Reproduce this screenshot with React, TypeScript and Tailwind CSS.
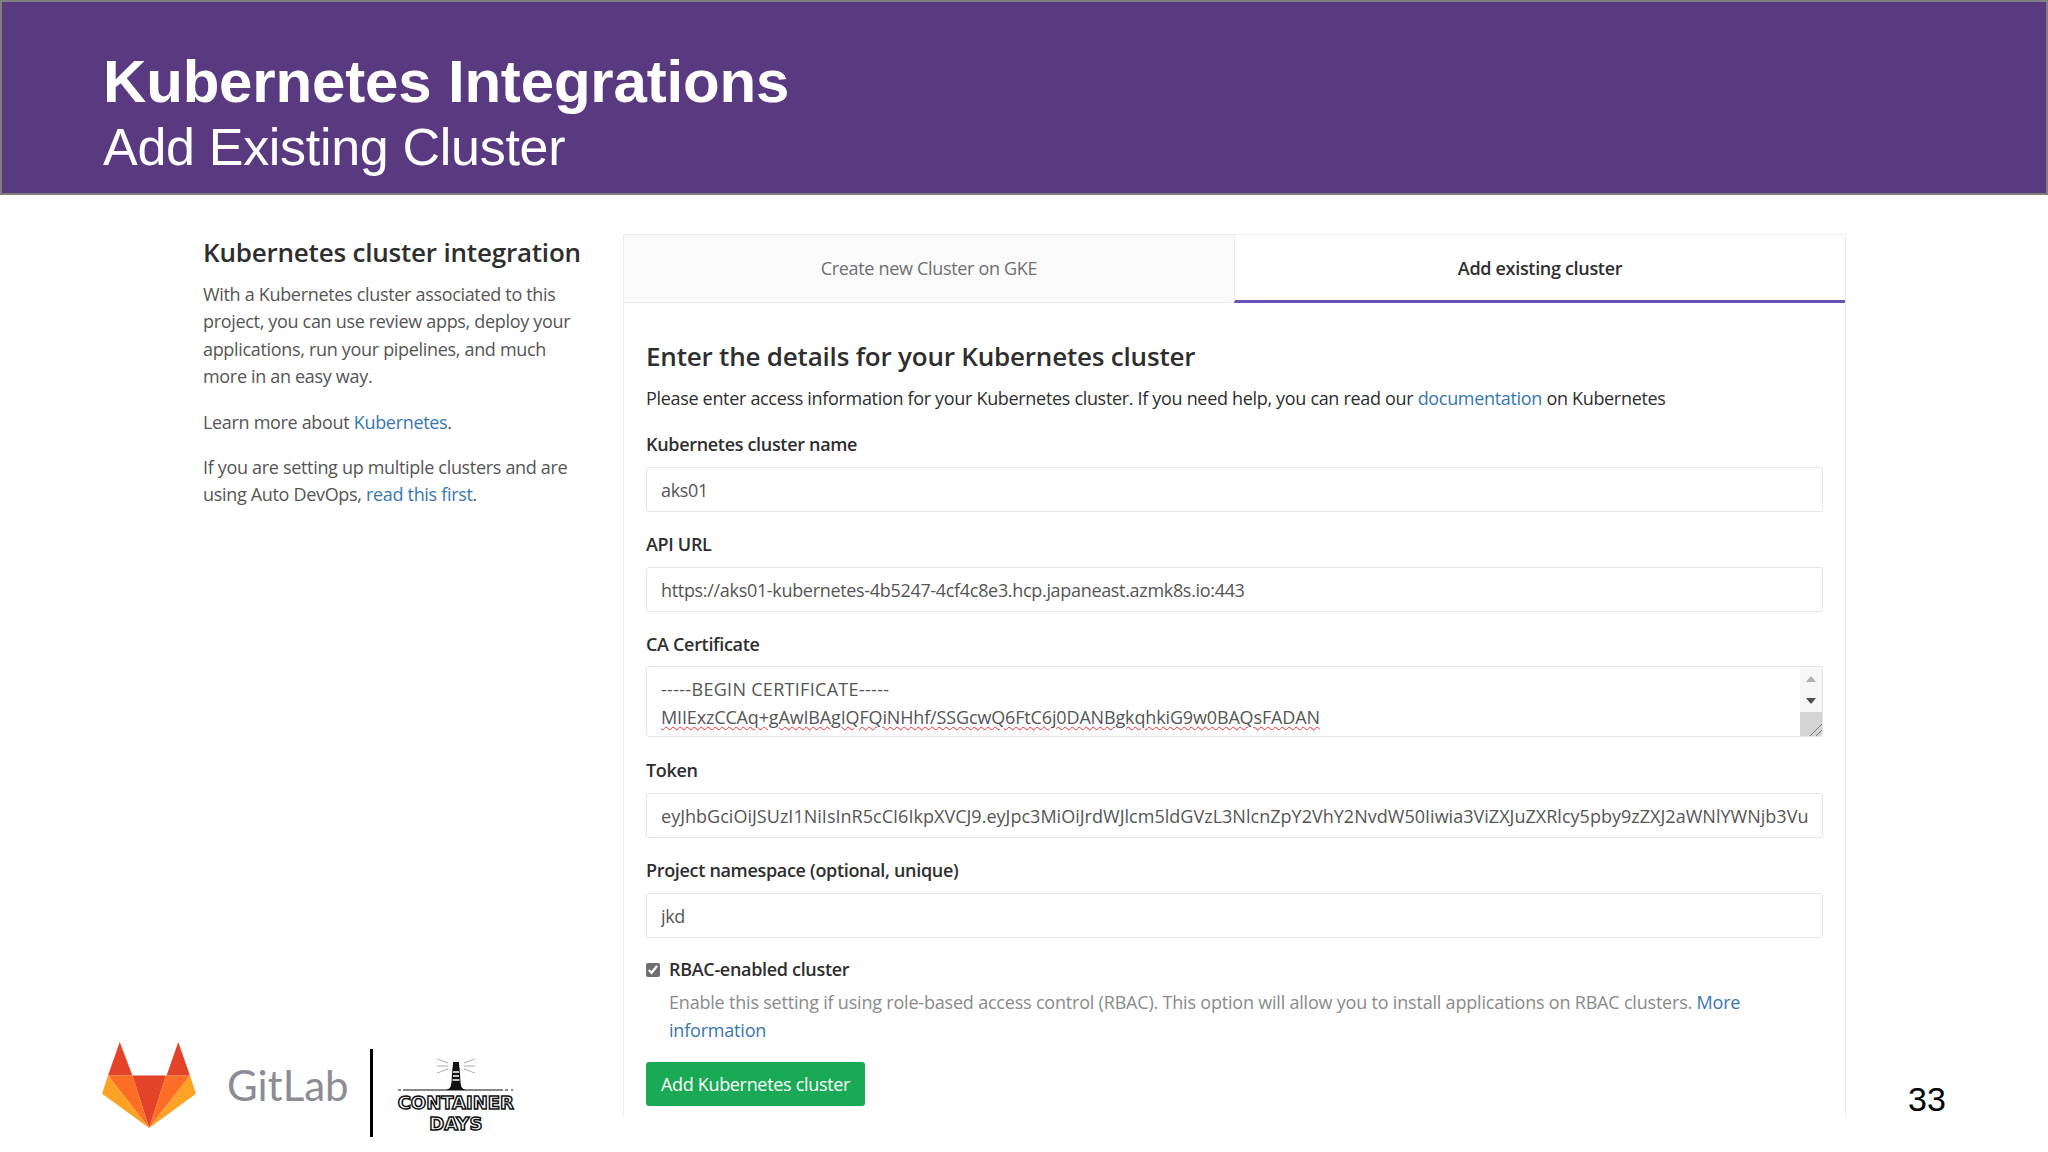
const font = "font-['Open_Sans','Noto_Sans',sans-serif]";
const token =
  'eyJhbGciOiJSUzI1NiIsInR5cCI6IkpXVCJ9.eyJpc3MiOiJrdWJlcm5ldGVzL3NlcnZpY2VhY2NvdW50Iiwia3ViZXJuZXRlcy5pby9zZXJ2aWNlYWNjb3VudCI6';

function Field({ label, value, className, inputClass }: { label: string; value: string; className?: string; inputClass?: string }) {
  return (
    <div className={className}>
      <label className="block h-[27px] leading-[27px] font-semibold text-[#2e2e2e]">{label}</label>
      <input
        readOnly
        value={value}
        className={`mt-[9px] block h-[45px] w-full rounded-[3px] border border-[#e5e5e5] bg-white px-[14px] text-[#555] outline-none ${inputClass ?? ''}`}
      />
    </div>
  );
}

function GitlabFox() {
  return (
    <svg viewBox="127 128 281 257" className="mb-[21px] h-[86px] w-[94px] shrink-0">
      <polygon points="180,128 145,228 218,228" fill="#e24329" />
      <polygon points="355,128 320,228 390,228" fill="#e24329" />
      <polygon points="218,228 318,228 268,385" fill="#e24329" />
      <polygon points="145,228 218,228 268,385" fill="#fc6d26" />
      <polygon points="390,228 318,228 268,385" fill="#fc6d26" />
      <polygon points="145,228 127,283 268,385" fill="#fca326" />
      <polygon points="390,228 408,283 268,385" fill="#fca326" />
    </svg>
  );
}

function Lighthouse() {
  return (
    <svg viewBox="0 0 116 34" className="mb-[1px] h-[34px] w-[116px]">
      <path d="M0 33H116" stroke="#111" strokeWidth="1" strokeDasharray="3 2 100 2 3" />
      <path d="M48 33c4-1 5-3 5.500-8l1-15h7l1 15c.5 5 1.500 7 5.500 8z" fill="#111" />
      <path d="M55 15h6M55 19h6M54.500 23h7" stroke="#fff" strokeWidth="1.500" />
      <path d="M54 9l4-4 4 4z" fill="#111" />
      <rect x="55" y="5" width="6" height="5" fill="#111" />
      <path d="M50 6l-11-4M50 9H39M50 12l-11 4M66 6l11-4M66 9h11M66 12l11 4" stroke="#888" strokeWidth="0.700" />
    </svg>
  );
}

function ScrollGutter() {
  return (
    <div className="flex w-[22px] shrink-0 flex-col items-center bg-[#f6f6f6]">
      <svg viewBox="0 0 10 6" className="mt-[9px] h-[6px] w-[10px]">
        <polygon points="5,0 10,6 0,6" fill="#b0b0b0" />
      </svg>
      <svg viewBox="0 0 10 6" className="mt-[16px] h-[6px] w-[10px]">
        <polygon points="0,0 10,0 5,6" fill="#505050" />
      </svg>
      <div className="mt-auto flex h-[24px] w-full items-end justify-end bg-[#d4d4d4]">
        <svg viewBox="0 0 14 14" className="h-[14px] w-[14px]">
          <path d="M2 14L14 2M8 14l6-6" stroke="#777" strokeWidth="1" />
        </svg>
      </div>
    </div>
  );
}

export default function App() {
  return (
    <div className={`flex h-[1152px] w-[2048px] flex-col overflow-hidden bg-white ${font}`}>
      {/* Slide title */}
      <header className="h-[195px] shrink-0 border-2 border-[#7f7f7f] bg-[#593a80] pl-[101px] pt-[44px] font-['Liberation_Sans',sans-serif] text-white">
        <h1 className="text-[60px] font-bold leading-[72px] tracking-[-0.17px]">Kubernetes Integrations</h1>
        <p className="text-[52px] leading-[58px] tracking-[-0.3px]">Add Existing Cluster</p>
      </header>

      <div className="flex min-h-0 flex-1 text-[18px] leading-[27.4px] tracking-[-0.32px]">
        {/* Left column with intro and logos */}
        <aside className="flex w-[623px] shrink-0 flex-col justify-between pb-[3px] pl-[102px] pt-[39px]">
          <div className="ml-[101px] w-[380px] text-[#555]">
            <h2 className="mb-[11px] whitespace-nowrap text-[26px] font-semibold leading-[36px] tracking-[-0.2px] text-[#2e2e2e]">
              Kubernetes cluster integration
            </h2>
            <p>
              With a Kubernetes cluster associated to this project, you can use review apps, deploy your
              applications, run your pipelines, and much more in an easy way.
            </p>
            <p className="mt-[18px]">
              Learn more about <a className="text-[#3777b0]">Kubernetes</a>.
            </p>
            <p className="mt-[18px]">
              If you are setting up multiple clusters and are using Auto DevOps,{' '}
              <a className="text-[#3777b0]">read this first</a>.
            </p>
          </div>
          <div className="flex items-center">
            <GitlabFox />
            <span className="mb-[21px] ml-[31px] font-['Lato',sans-serif] text-[42px] leading-none tracking-normal text-[#8c8c96]">
              GitLab
            </span>
            <div className="mb-[5px] ml-[21px] h-[88px] w-[3px] bg-black" />
            <div className="ml-[25px] flex flex-col items-center font-['DejaVu_Sans',sans-serif] font-bold leading-[21px] tracking-normal text-white [-webkit-text-stroke:1.5px_#111]">
              <Lighthouse />
              <span className="text-[18px]">CONTAINER</span>
              <span className="text-[18px]">DAYS</span>
            </div>
          </div>
        </aside>

        {/* Cluster form */}
        <main className="mb-[36px] mt-[39px] w-[1223px] shrink-0 overflow-hidden border-x border-t border-[#ececec]">
          <div className="flex h-[68px] text-center">
            <div className="flex-1 border-b border-[#ececec] bg-[#fafafa] leading-[66px] text-[#707070]">
              Create new Cluster on GKE
            </div>
            <div className="flex-1 border-b-[3px] border-l border-[#6b4fbb] border-l-[#ececec] font-semibold leading-[66px] text-[#2e2e2e]">
              Add existing cluster
            </div>
          </div>

          <form className="pl-[22px] pr-[22px] pt-[35px]">
            <h3 className="text-[26px] font-semibold leading-[36px] tracking-[-0.2px] text-[#2e2e2e]">
              Enter the details for your Kubernetes cluster
            </h3>
            <p className="mt-[11px] text-[#2e2e2e]">
              Please enter access information for your Kubernetes cluster. If you need help, you can read our{' '}
              <a className="text-[#3777b0]">documentation</a> on Kubernetes
            </p>
            <Field label="Kubernetes cluster name" value="aks01" className="mt-[19px]" />
            <Field
              label="API URL"
              value="https://aks01-kubernetes-4b5247-4cf4c8e3.hcp.japaneast.azmk8s.io:443"
              className="mt-[19px]"
            />

            <div className="mt-[19px]">
              <label className="block h-[27px] leading-[27px] font-semibold text-[#2e2e2e]">CA Certificate</label>
              <div className="mt-[8px] flex h-[71px] overflow-hidden rounded-[3px] border border-[#e5e5e5] bg-white">
                <div className="min-w-0 flex-1 overflow-hidden whitespace-nowrap pl-[14px] pt-[9px] text-[#555]">
                  <div className="tracking-[0.3px]">-----BEGIN CERTIFICATE-----</div>
                  <div className="tracking-[-0.15px] underline decoration-red-500 decoration-wavy decoration-1 underline-offset-2">
                    MIIExzCCAq+gAwIBAgIQFQiNHhf/SSGcwQ6FtC6j0DANBgkqhkiG9w0BAQsFADAN
                  </div>
                </div>
                <ScrollGutter />
              </div>
            </div>

            <Field label="Token" value={token} className="mt-[20px]" inputClass="tracking-[0.02px]" />
            <Field label="Project namespace (optional, unique)" value="jkd" className="mt-[19px]" />

            <div className="mt-[18px] flex h-[27px] items-center">
              <input type="checkbox" checked readOnly className="h-[14px] w-[14px] accent-[#6f6f6f]" />
              <label className="ml-[9px] font-semibold text-[#2e2e2e]">RBAC-enabled cluster</label>
            </div>
            <p className="mt-[6px] pl-[23px] pr-[20px] tracking-[-0.2px] text-[#8a8a8a]">
              Enable this setting if using role-based access control (RBAC). This option will allow you to install
              applications on RBAC clusters. <a className="text-[#3777b0]">More information</a>
            </p>
            <button
              type="button"
              className="mt-[18px] h-[44px] w-[219px] rounded-[3px] bg-[#1aaa55] text-white"
            >
              Add Kubernetes cluster
            </button>
          </form>
        </main>

        <div className="flex flex-1 items-end justify-center pb-[36px] pr-[40px] font-['Liberation_Sans',sans-serif] text-[34px] leading-none tracking-normal text-black">
          33
        </div>
      </div>
    </div>
  );
}
